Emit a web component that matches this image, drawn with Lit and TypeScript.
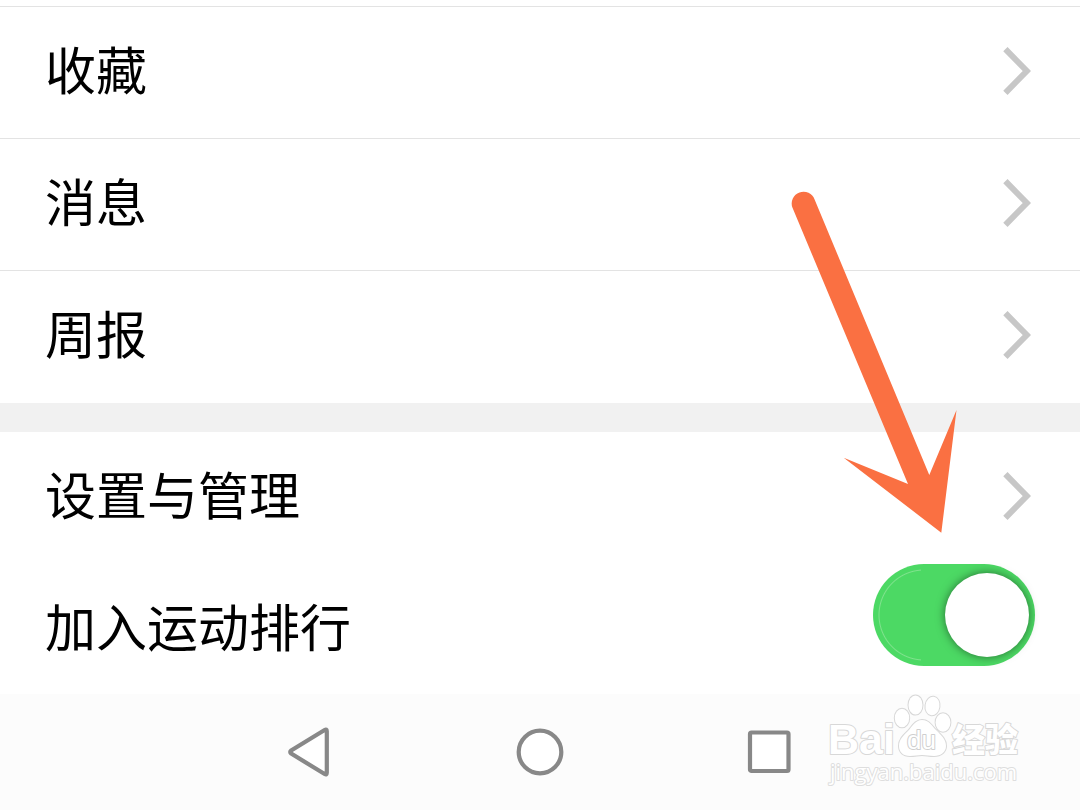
import { LitElement, html, css, svg } from "lit";
import { customElement, property, state } from "lit/decorators.js";

@customElement("menu-row")
class MenuRow extends LitElement {
  @property() label = "";
  @property({ type: Boolean, reflect: true }) divided = false;

  static styles = css`
    :host {
      display: block;
    }
    :host([divided]) {
      border-top: 1px solid #e3e3e3;
    }
    .row {
      display: flex;
      align-items: center;
      justify-content: space-between;
      height: 128px;
      padding: 0 49px 3px 45px;
      color: #000;
      text-decoration: none;
      font-size: 51px;
      line-height: 72px;
    }
    .label {
      padding-bottom: 6px;
    }
    .chevron {
      width: 28px;
      height: 48px;
      fill: none;
      stroke: #c7c7c7;
      stroke-width: 6;
    }
  `;

  render() {
    return html`<a class="row" href="#">
      <span class="label">${this.label}</span>
      <svg class="chevron" viewBox="0 0 28 48" aria-hidden="true">
        <path d="M2.4 2.2 23.8 24 2.4 45.8" />
      </svg>
    </a>`;
  }
}

@customElement("toggle-row")
class ToggleRow extends LitElement {
  @property() label = "";
  @state() private on = true;

  static styles = css`
    .row {
      display: flex;
      align-items: flex-start;
      justify-content: space-between;
      height: 131px;
      padding: 0 45px;
      color: #000;
      font-size: 51px;
      line-height: 72px;
    }
    .label {
      flex: 1;
      padding-top: 26px;
    }
    .switch {
      appearance: none;
      box-sizing: border-box;
      flex: none;
      width: 162px;
      height: 102px;
      margin: 1px 0 0;
      padding: 9px 6px;
      border-radius: 51px;
      background: #d8d8d8;
      display: flex;
    }
    .switch:checked {
      background: radial-gradient(circle at 51px 51px, transparent 44px, #7ee28c 45px, transparent 46px) 0 0 / 48px 100% no-repeat #4cd964;
      justify-content: flex-end;
    }
    .switch::before {
      content: "";
      width: 84px;
      height: 84px;
      border-radius: 50%;
      background: #fff;
      box-shadow: 0 0 10px rgba(0, 0, 0, 0.5);
    }
  `;

  render() {
    return html`<div class="row">
      <label class="label" for="switch">${this.label}</label>
      <input
        class="switch"
        id="switch"
        type="checkbox"
        role="switch"
        .checked=${this.on}
        @change=${(e: Event) => (this.on = (e.target as HTMLInputElement).checked)}
      />
    </div>`;
  }
}

const navItems = [
  { name: "返回", shape: svg`<path d="M46.8 9.2v41.6q0 2.4-2.2 1.2L11.2 31.6q-2-1.6 0-3.2L44.6 8q2.2-1.2 2.2 1.2Z" />` },
  { name: "主页", shape: svg`<circle cx="30" cy="30" r="21.3" />` },
  { name: "最近任务", shape: svg`<rect x="10" y="10.5" width="38.5" height="38.5" rx="1.5" />` },
];

@customElement("app-root")
class AppRoot extends LitElement {
  static styles = css`
    :host {
      display: block;
      position: relative;
      background: #fff;
      font-family: "Noto Sans CJK SC", "Noto Sans", sans-serif;
    }
    .first {
      padding: 6px 0 1px;
    }
    .divider {
      height: 29px;
      background: #f1f1f1;
    }
    .nav {
      display: flex;
      align-items: center;
      justify-content: center;
      height: 116px;
      background: #fcfcfc;
    }
    .key {
      display: flex;
      justify-content: center;
      width: 230px;
      padding: 0;
      border: 0;
      background: none;
    }
    .glyph {
      width: 60px;
      height: 60px;
      fill: #fff;
      stroke: #888;
      stroke-width: 4.2;
    }
    .arrow {
      position: absolute;
      top: 180px;
      right: 100px;
      width: 200px;
      height: 370px;
      fill: #fa7042;
      pointer-events: none;
    }
    .mark {
      position: absolute;
      right: 50px;
      bottom: 10px;
      width: 210px;
      height: 110px;
      fill: #fff;
      stroke: #d8d8d8;
      stroke-width: 2;
      stroke-linejoin: round;
      paint-order: stroke;
      pointer-events: none;
    }
    .latin {
      font: bold 43px "Liberation Sans", sans-serif;
    }
    .du {
      font: 26px "Liberation Sans", sans-serif;
      stroke: #cfcfcf;
    }
    .han {
      font: 900 33px "Noto Sans CJK SC", sans-serif;
    }
    .site {
      font: 22px "Open Sans", sans-serif;
      stroke: #dedede;
    }
  `;

  render() {
    return html`
      <main>
        <section class="first">
          <menu-row divided label="收藏"></menu-row>
          <menu-row divided label="消息"></menu-row>
          <menu-row divided label="周报"></menu-row>
        </section>
        <div class="divider"></div>
        <section>
          <menu-row label="设置与管理"></menu-row>
          <toggle-row label="加入运动排行"></toggle-row>
        </section>
      </main>
      <nav class="nav">
        ${navItems.map(
          (item) => html`<button class="key" aria-label=${item.name}>
            <svg class="glyph" viewBox="0 0 60 60" aria-hidden="true">${item.shape}</svg>
          </button>`
        )}
      </nav>
      <svg class="arrow" viewBox="0 0 200 370" aria-hidden="true">
        <path d="M12.4 27.5A11.6 11.6 0 0 1 34.6 19.5L149.3 295 176.5 230 161.3 352.7 63.7 277.7 128 304Z" />
      </svg>
      <svg class="mark" viewBox="0 0 210 110">
        <text class="latin" x="8" y="64">Bai</text>
        <ellipse cx="82" cy="28" rx="7.2" ry="9.3" />
        <ellipse cx="95.5" cy="15" rx="7" ry="9.6" />
        <ellipse cx="112.5" cy="16" rx="7" ry="9.4" transform="rotate(8 112.5 16)" />
        <ellipse cx="123" cy="32.5" rx="7.4" ry="9.2" />
        <path d="M102 30c7 0 10 6 14 10 5 5 10 9 10 16 0 6-5 10-12 10-5 0-8-1-12-1s-7 1-12 1c-7 0-11-4-11-10 0-7 5-11 9-15s7-11 14-11Z" />
        <text class="du" x="87" y="59">du</text>
        <text class="han" x="132" y="62">经验</text>
        <text class="site" x="10" y="90">jingyan.baidu.com</text>
      </svg>
    `;
  }
}
